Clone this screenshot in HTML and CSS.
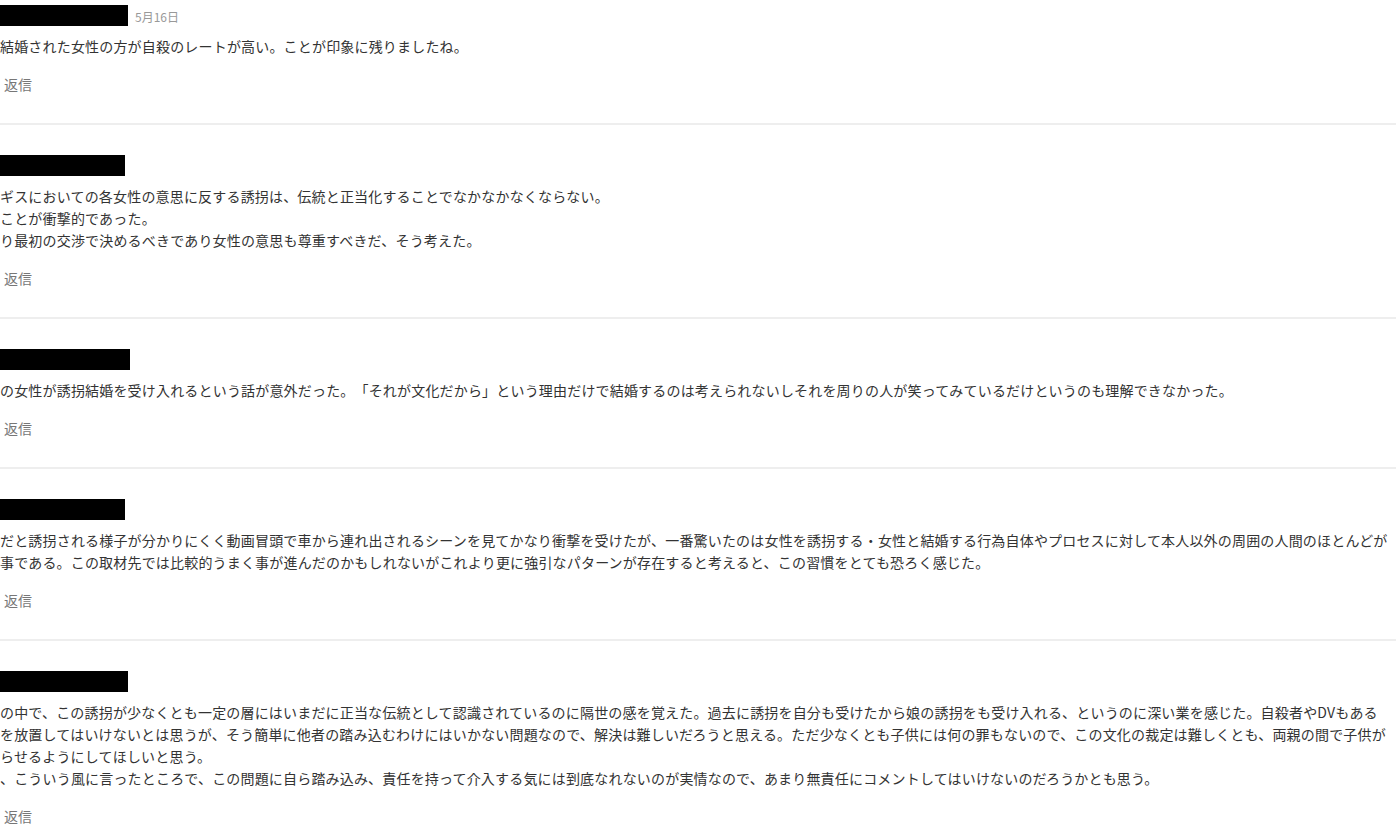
FILE: index.html
```html
<!DOCTYPE html>
<html lang="ja">

<head>
    <meta charset="UTF-8">
    <meta name="viewport" content="width=device-width, initial-scale=1.0">
    <title>コメント</title>
    <link rel="stylesheet" href="styles.css">
</head>

<body>
    <div class="comments">
        <div class="comment first">
            <div class="head">
                <div class="name" style="width: 128px"></div>
                <span class="date">5月16日</span>
            </div>
            <p class="text">結婚された女性の方が自殺のレートが高い。ことが印象に残りましたね。</p>
            <a class="reply">返信</a>
        </div>

        <div class="comment">
            <div class="head">
                <div class="name" style="width: 125px"></div>
            </div>
            <p class="text">ギスにおいての各女性の意思に反する誘拐は、伝統と正当化することでなかなかなくならない。<br>ことが衝撃的であった。<br>り最初の交渉で決めるべきであり女性の意思も尊重すべきだ、そう考えた。</p>
            <a class="reply">返信</a>
        </div>

        <div class="comment">
            <div class="head">
                <div class="name" style="width: 130px"></div>
            </div>
            <p class="text">の女性が誘拐結婚を受け入れるという話が意外だった。「それが文化だから」という理由だけで結婚するのは考えられないしそれを周りの人が笑ってみているだけというのも理解できなかった。</p>
            <a class="reply">返信</a>
        </div>

        <div class="comment">
            <div class="head">
                <div class="name" style="width: 125px"></div>
            </div>
            <p class="text">だと誘拐される様子が分かりにくく動画冒頭で車から連れ出されるシーンを見てかなり衝撃を受けたが、一番驚いたのは女性を誘拐する・女性と結婚する行為自体やプロセスに対して本人以外の周囲の人間のほとんどが<br>事である。この取材先では比較的うまく事が進んだのかもしれないがこれより更に強引なパターンが存在すると考えると、この習慣をとても恐ろく感じた。</p>
            <a class="reply">返信</a>
        </div>

        <div class="comment">
            <div class="head">
                <div class="name" style="width: 128px"></div>
            </div>
            <p class="text">の中で、この誘拐が少なくとも一定の層にはいまだに正当な伝統として認識されているのに隔世の感を覚えた。過去に誘拐を自分も受けたから娘の誘拐をも受け入れる、というのに深い業を感じた。自殺者やDVもある<br>を放置してはいけないとは思うが、そう簡単に他者の踏み込むわけにはいかない問題なので、解決は難しいだろうと思える。ただ少なくとも子供には何の罪もないので、この文化の裁定は難しくとも、両親の間で子供が<br>らせるようにしてほしいと思う。<br>、こういう風に言ったところで、この問題に自ら踏み込み、責任を持って介入する気には到底なれないのが実情なので、あまり無責任にコメントしてはいけないのだろうかとも思う。</p>
            <a class="reply">返信</a>
        </div>
    </div>
</body>

</html>
```

FILE: styles.css
```css
* {
    padding: 0;
    margin: 0;
    box-sizing: border-box;
}

html,
body {
    background: #fff;
    overflow: hidden;
}

body {
    font-family: "Noto Sans CJK JP", "Noto Sans", sans-serif;
    color: #333;
    font-size: 14px;
    text-spacing-trim: space-all;
}

.comments {
    width: 1396px;
}

.comment {
    padding: 30px 0 28px;
    border-bottom: 2px solid #eeeeee;
}

.comment.first {
    padding-top: 5px;
}

.head {
    display: flex;
    align-items: flex-end;
    gap: 7px;
    height: 21px;
}

.name {
    height: 21px;
    background: #000;
}

.date {
    font-size: 12px;
    line-height: 18px;
    color: #999;
}

.text {
    margin-top: 9px;
    line-height: 22px;
    letter-spacing: 0.18px;
    white-space: nowrap;
}

.reply {
    display: block;
    margin-top: 16px;
    padding-left: 4px;
    line-height: 22px;
    color: #777;
    cursor: pointer;
}
```
